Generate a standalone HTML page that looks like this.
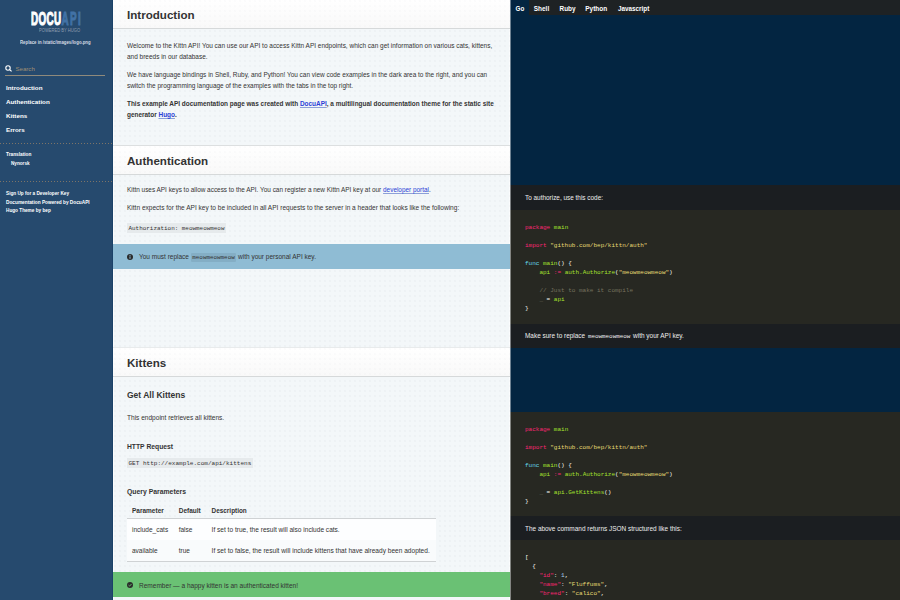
<!DOCTYPE html>
<html><head><meta charset="utf-8">
<style>
*{margin:0;padding:0;box-sizing:border-box}
html,body{width:900px;height:600px;overflow:hidden;background:#f3f7f9;font-family:"Liberation Sans",sans-serif;color:#333;position:relative}
.r{position:absolute}
.t{position:absolute;white-space:nowrap}
.t a{color:#2b3fd6;text-decoration:underline;text-decoration-color:#8da0d8;text-underline-offset:1px}
.t code{font-family:"Liberation Mono",monospace;font-size:5.9px;background:rgba(0,0,0,0.07);padding:1px 1.5px;border-radius:1px}
.t code.d{background:transparent;color:#eee;padding:0 1px}
.k{color:#f92672}.g{color:#a6e22e}.y{color:#e6db74}.bl{color:#66d9ef}.c{color:#75715e}.pu{color:#a3c8ea}
.dots{background-image:radial-gradient(circle at 1px 1px, rgba(120,130,140,0.06) 0.6px, transparent 0.9px);background-size:5px 5px}
</style></head><body>
<!-- sidebar -->
<div class="r" style="left:0;top:0;width:112px;height:600px;background:#264a6e"></div>
<div class="r" style="left:112px;top:0;width:1px;height:600px;background:#1b4268"></div>
<div class="r" style="left:113px;top:0;width:1px;height:600px;background:#fbfcfd"></div>
<!-- logo -->
<div class="t" style="left:30.5px;top:9px;font:bold 19px/20px 'Liberation Sans',sans-serif;color:#fff;transform:scaleX(0.52);transform-origin:0 0;letter-spacing:0.7px;-webkit-text-stroke:1.1px #fff">DOCU<span style="color:#4272a6;-webkit-text-stroke:1.1px #4272a6;letter-spacing:2.6px">API</span></div>
<!-- search icon -->
<svg class="r" style="left:5px;top:65px" width="8" height="7" viewBox="0 0 8 7"><circle cx="3" cy="3" r="2.2" fill="none" stroke="#fff" stroke-width="1.1"/><line x1="4.6" y1="4.6" x2="6.6" y2="6.4" stroke="#fff" stroke-width="1.2"/></svg>
<div class="r" style="left:5px;top:75px;width:100px;height:1px;background:#8f8a7c"></div>
<div class="r" style="left:0;top:143px;width:112px;height:1px;background:repeating-linear-gradient(90deg,#7d7468 0 1.5px,transparent 1.5px 3px)"></div>
<div class="r" style="left:0;top:181px;width:112px;height:1px;background:repeating-linear-gradient(90deg,#7d7468 0 1.5px,transparent 1.5px 3px)"></div>

<!-- main -->
<div class="r" style="left:509px;top:0;width:1px;height:600px;background:#fcfdfe"></div>

<div class="r dots" style="left:114px;top:0;width:396px;height:600px"></div>
<div class="r" style="left:113px;top:0;width:397px;height:28px;background:linear-gradient(#fff,#f9f9f9)"></div>
<div class="r" style="left:113px;top:28px;width:397px;height:1px;background:#d6d9da"></div>
<div class="r" style="left:113px;top:145px;width:397px;height:1px;background:#dcdfe0"></div>
<div class="r" style="left:113px;top:146px;width:397px;height:28px;background:linear-gradient(#fff,#f9f9f9)"></div>
<div class="r" style="left:113px;top:174px;width:397px;height:1px;background:#d6d9da"></div>
<div class="r" style="left:113px;top:347px;width:397px;height:1px;background:#e8ebec"></div>
<div class="r" style="left:113px;top:348px;width:397px;height:28px;background:linear-gradient(#fff,#f9f9f9)"></div>
<div class="r" style="left:113px;top:376px;width:397px;height:1px;background:#d6d9da"></div>
<div class="r dots" style="left:114px;top:0;width:396px;height:28px;opacity:.6"></div>
<div class="r dots" style="left:114px;top:146px;width:396px;height:28px;opacity:.6"></div>
<div class="r dots" style="left:114px;top:348px;width:396px;height:28px;opacity:.6"></div>
<!-- inline code boxes -->
<div class="r" style="left:127px;top:223px;width:99px;height:10px;background:#e6eaec"></div>
<div class="r" style="left:127px;top:458px;width:126px;height:10px;background:#e6eaec"></div>
<!-- notice aside -->
<div class="r" style="left:113px;top:244px;width:397px;height:25px;background:#8fbcd4"></div>
<svg class="r" style="left:127px;top:254px" width="6" height="6" viewBox="0 0 6 6"><circle cx="3" cy="3" r="3" fill="#2b2b2b"/><rect x="2.5" y="2.4" width="1" height="2.4" fill="#8fbcd4"/><rect x="2.5" y="1.1" width="1" height="0.9" fill="#8fbcd4"/></svg>
<!-- table -->
<div class="r" style="left:127px;top:518px;width:309px;height:1px;background:#cfd2d4"></div>
<div class="r" style="left:127px;top:519px;width:309px;height:21px;background:#fdfeff"></div>
<div class="r" style="left:127px;top:540px;width:309px;height:21px;background:#f9fbfc"></div>
<div class="r" style="left:127px;top:561px;width:309px;height:1px;background:#cfd2d4"></div>
<!-- success aside -->
<div class="r" style="left:113px;top:572px;width:397px;height:25px;background:#6ac174"></div>
<svg class="r" style="left:127px;top:582px" width="6" height="6" viewBox="0 0 6 6"><circle cx="3" cy="3" r="3" fill="#2b2b2b"/><path d="M1.5 3.1 L2.6 4.1 L4.5 2" fill="none" stroke="#6ac174" stroke-width="0.9"/></svg>

<!-- right -->
<div class="r" style="left:510px;top:0;width:390px;height:600px;background:#032541"></div>
<div class="r" style="left:510px;top:0;width:390px;height:15px;background:#1e2224"></div>
<div class="r" style="left:510px;top:0;width:19px;height:15px;background:#032541"></div>
<div class="r" style="left:510px;top:185px;width:390px;height:25px;background:#1b1e21"></div>
<div class="r" style="left:510px;top:210px;width:390px;height:114px;background:#272822"></div>
<div class="r" style="left:510px;top:324px;width:390px;height:24px;background:#1b1e21"></div>
<div class="r" style="left:510px;top:412px;width:390px;height:104px;background:#272822"></div>
<div class="r" style="left:510px;top:516px;width:390px;height:24px;background:#1b1e21"></div>
<div class="r" style="left:510px;top:540px;width:390px;height:60px;background:#272822"></div>

<div class="r" style="left:510px;top:0;width:1px;height:600px;background:rgba(243,247,249,0.45)"></div>
<div class="t" style="left:6px;top:78px;font:bold 6.25px/20px 'Liberation Sans',sans-serif;color:#fff;">Introduction</div>
<div class="t" style="left:6px;top:92px;font:bold 6.25px/20px 'Liberation Sans',sans-serif;color:#fff;">Authentication</div>
<div class="t" style="left:6px;top:106px;font:bold 6.25px/20px 'Liberation Sans',sans-serif;color:#fff;">Kittens</div>
<div class="t" style="left:6px;top:120px;font:bold 6.25px/20px 'Liberation Sans',sans-serif;color:#fff;">Errors</div>
<div class="t" style="left:6px;top:145px;font:bold 4.75px/20px 'Liberation Sans',sans-serif;color:#fff;">Translation</div>
<div class="t" style="left:11px;top:154px;font:bold 4.65px/20px 'Liberation Sans',sans-serif;color:#fff;">Nynorsk</div>
<div class="t" style="left:6px;top:184px;font:bold 4.7px/20px 'Liberation Sans',sans-serif;color:#fff;">Sign Up for a Developer Key</div>
<div class="t" style="left:6px;top:193px;font:bold 4.75px/20px 'Liberation Sans',sans-serif;color:#fff;">Documentation Powered by DocuAPI</div>
<div class="t" style="left:6px;top:201px;font:bold 4.7px/20px 'Liberation Sans',sans-serif;color:#fff;">Hugo Theme by bep</div>
<div class="t" style="left:15.5px;top:59px;font:normal 6.1px/20px 'Liberation Sans',sans-serif;color:#a08f74;">Search</div>
<div class="t" style="left:20px;top:32px;font:bold 5.6px/20px 'Liberation Sans',sans-serif;color:#d5dce4;transform:scaleX(0.77);transform-origin:0 0">Replace in /static/images/logo.png</div>
<div class="t" style="left:39px;top:20px;font:normal 5.4px/20px 'Liberation Sans',sans-serif;color:#8d9db0;transform:scaleX(0.76);transform-origin:0 0">POWERED BY HUGO</div>
<div class="t" style="left:127px;top:5px;font:bold 11.6px/20px 'Liberation Sans',sans-serif;color:#333;">Introduction</div>
<div class="t" style="left:127px;top:36px;font:normal 6.47px/20px 'Liberation Sans',sans-serif;color:#333;">Welcome to the Kittn API! You can use our API to access Kittn API endpoints, which can get information on various cats, kittens,</div>
<div class="t" style="left:127px;top:47px;font:normal 6.47px/20px 'Liberation Sans',sans-serif;color:#333;">and breeds in our database.</div>
<div class="t" style="left:127px;top:65px;font:normal 6.45px/20px 'Liberation Sans',sans-serif;color:#333;">We have language bindings in Shell, Ruby, and Python! You can view code examples in the dark area to the right, and you can</div>
<div class="t" style="left:127px;top:76px;font:normal 6.45px/20px 'Liberation Sans',sans-serif;color:#333;">switch the programming language of the examples with the tabs in the top right.</div>
<div class="t" style="left:127px;top:94px;font:bold 6.44px/20px 'Liberation Sans',sans-serif;color:#333;">This example API documentation page was created with <a>DocuAPI</a>, a multilingual documentation theme for the static site</div>
<div class="t" style="left:127px;top:105px;font:bold 6.44px/20px 'Liberation Sans',sans-serif;color:#333;">generator <a>Hugo</a>.</div>
<div class="t" style="left:127px;top:151px;font:bold 11.6px/20px 'Liberation Sans',sans-serif;color:#333;">Authentication</div>
<div class="t" style="left:127px;top:180px;font:normal 6.41px/20px 'Liberation Sans',sans-serif;color:#333;">Kittn uses API keys to allow access to the API. You can register a new Kittn API key at our <a>developer portal</a>.</div>
<div class="t" style="left:127px;top:198px;font:normal 6.54px/20px 'Liberation Sans',sans-serif;color:#333;">Kittn expects for the API key to be included in all API requests to the server in a header that looks like the following:</div>
<div class="t" style="left:128.5px;top:219px;font:normal 5.93px/20px 'Liberation Mono',sans-serif;color:#333;">Authorization: meowmeowmeow</div>
<div class="t" style="left:139px;top:247px;font:normal 6.5px/20px 'Liberation Sans',sans-serif;color:#333;">You must replace <code>meowmeowmeow</code> with your personal API key.</div>
<div class="t" style="left:127px;top:353px;font:bold 11.6px/20px 'Liberation Sans',sans-serif;color:#333;">Kittens</div>
<div class="t" style="left:127px;top:385px;font:bold 8.5px/20px 'Liberation Sans',sans-serif;color:#333;">Get All Kittens</div>
<div class="t" style="left:127px;top:408px;font:normal 6.55px/20px 'Liberation Sans',sans-serif;color:#333;">This endpoint retrieves all kittens.</div>
<div class="t" style="left:127px;top:437px;font:bold 6.75px/20px 'Liberation Sans',sans-serif;color:#333;">HTTP Request</div>
<div class="t" style="left:128.5px;top:454px;font:normal 6.03px/20px 'Liberation Mono',sans-serif;color:#333;">GET http://example.com/api/kittens</div>
<div class="t" style="left:127px;top:482px;font:bold 6.85px/20px 'Liberation Sans',sans-serif;color:#333;">Query Parameters</div>
<div class="t" style="left:132px;top:501px;font:bold 6.5px/20px 'Liberation Sans',sans-serif;color:#333;">Parameter</div>
<div class="t" style="left:178.7px;top:501px;font:bold 6.5px/20px 'Liberation Sans',sans-serif;color:#333;">Default</div>
<div class="t" style="left:211.6px;top:501px;font:bold 6.4px/20px 'Liberation Sans',sans-serif;color:#333;">Description</div>
<div class="t" style="left:132px;top:520px;font:normal 6.5px/20px 'Liberation Sans',sans-serif;color:#333;">include_cats</div>
<div class="t" style="left:178.7px;top:520px;font:normal 6.5px/20px 'Liberation Sans',sans-serif;color:#333;">false</div>
<div class="t" style="left:211.6px;top:520px;font:normal 6.55px/20px 'Liberation Sans',sans-serif;color:#333;">If set to true, the result will also include cats.</div>
<div class="t" style="left:132px;top:541px;font:normal 6.5px/20px 'Liberation Sans',sans-serif;color:#333;">available</div>
<div class="t" style="left:178.7px;top:541px;font:normal 6.5px/20px 'Liberation Sans',sans-serif;color:#333;">true</div>
<div class="t" style="left:211.6px;top:541px;font:normal 6.57px/20px 'Liberation Sans',sans-serif;color:#333;">If set to false, the result will include kittens that have already been adopted.</div>
<div class="t" style="left:139px;top:576px;font:normal 6.54px/20px 'Liberation Sans',sans-serif;color:#333;">Remember — a happy kitten is an authenticated kitten!</div>
<div class="t" style="left:515.5px;top:-1px;font:bold 6.3px/20px 'Liberation Sans',sans-serif;color:#fff;">Go</div>
<div class="t" style="left:533.8px;top:-1px;font:bold 6.44px/20px 'Liberation Sans',sans-serif;color:#fff;">Shell</div>
<div class="t" style="left:559.6px;top:-1px;font:bold 6.4px/20px 'Liberation Sans',sans-serif;color:#fff;">Ruby</div>
<div class="t" style="left:585.3px;top:-1px;font:bold 6.46px/20px 'Liberation Sans',sans-serif;color:#fff;">Python</div>
<div class="t" style="left:617.9px;top:-1px;font:bold 6.35px/20px 'Liberation Sans',sans-serif;color:#fff;">Javascript</div>
<div class="t" style="left:525px;top:188px;font:normal 6.41px/20px 'Liberation Sans',sans-serif;color:#eee;">To authorize, use this code:</div>
<div class="t" style="left:525px;top:326px;font:normal 6.45px/20px 'Liberation Sans',sans-serif;color:#eee;">Make sure to replace <code class="d">meowmeowmeow</code> with your API key.</div>
<div class="t" style="left:525px;top:519px;font:normal 6.45px/20px 'Liberation Sans',sans-serif;color:#eee;">The above command returns JSON structured like this:</div>
<div class="t" style="left:525px;top:218px;font:normal 6.0px/20px 'Liberation Mono',sans-serif;color:#f8f8f2;white-space:pre"><span class="k">package</span> <span class="g">main</span></div>
<div class="t" style="left:525px;top:236px;font:normal 6.0px/20px 'Liberation Mono',sans-serif;color:#f8f8f2;white-space:pre"><span class="k">import</span> <span class="y">"github.com/bep/kittn/auth"</span></div>
<div class="t" style="left:525px;top:254px;font:normal 6.0px/20px 'Liberation Mono',sans-serif;color:#f8f8f2;white-space:pre"><span class="bl">func</span> <span class="g">main</span>() {</div>
<div class="t" style="left:525px;top:263px;font:normal 6.0px/20px 'Liberation Mono',sans-serif;color:#f8f8f2;white-space:pre">    <span class="g">api</span> <span class="k">:=</span> <span class="g">auth.Authorize</span>(<span class="y">"meowmeowmeow"</span>)</div>
<div class="t" style="left:525px;top:281px;font:normal 6.0px/20px 'Liberation Mono',sans-serif;color:#f8f8f2;white-space:pre">    <span class="c">// Just to make it compile</span></div>
<div class="t" style="left:525px;top:290px;font:normal 6.0px/20px 'Liberation Mono',sans-serif;color:#f8f8f2;white-space:pre">    <span class="c">_</span> = <span class="g">api</span></div>
<div class="t" style="left:525px;top:299px;font:normal 6.0px/20px 'Liberation Mono',sans-serif;color:#f8f8f2;white-space:pre">}</div>
<div class="t" style="left:525px;top:420px;font:normal 6.0px/20px 'Liberation Mono',sans-serif;color:#f8f8f2;white-space:pre"><span class="k">package</span> <span class="g">main</span></div>
<div class="t" style="left:525px;top:438px;font:normal 6.0px/20px 'Liberation Mono',sans-serif;color:#f8f8f2;white-space:pre"><span class="k">import</span> <span class="y">"github.com/bep/kittn/auth"</span></div>
<div class="t" style="left:525px;top:456px;font:normal 6.0px/20px 'Liberation Mono',sans-serif;color:#f8f8f2;white-space:pre"><span class="bl">func</span> <span class="g">main</span>() {</div>
<div class="t" style="left:525px;top:465px;font:normal 6.0px/20px 'Liberation Mono',sans-serif;color:#f8f8f2;white-space:pre">    <span class="g">api</span> <span class="k">:=</span> <span class="g">auth.Authorize</span>(<span class="y">"meowmeowmeow"</span>)</div>
<div class="t" style="left:525px;top:483px;font:normal 6.0px/20px 'Liberation Mono',sans-serif;color:#f8f8f2;white-space:pre">    <span class="c">_</span> = <span class="g">api.GetKittens</span>()</div>
<div class="t" style="left:525px;top:492px;font:normal 6.0px/20px 'Liberation Mono',sans-serif;color:#f8f8f2;white-space:pre">}</div>
<div class="t" style="left:525px;top:548px;font:normal 6.0px/20px 'Liberation Mono',sans-serif;color:#f8f8f2;white-space:pre">[</div>
<div class="t" style="left:525px;top:557px;font:normal 6.0px/20px 'Liberation Mono',sans-serif;color:#f8f8f2;white-space:pre">  {</div>
<div class="t" style="left:525px;top:566px;font:normal 6.0px/20px 'Liberation Mono',sans-serif;color:#f8f8f2;white-space:pre">    <span class="k">"id"</span>: <span class="pu">1</span>,</div>
<div class="t" style="left:525px;top:575px;font:normal 6.0px/20px 'Liberation Mono',sans-serif;color:#f8f8f2;white-space:pre">    <span class="k">"name"</span>: <span class="y">"Fluffums"</span>,</div>
<div class="t" style="left:525px;top:584px;font:normal 6.0px/20px 'Liberation Mono',sans-serif;color:#f8f8f2;white-space:pre">    <span class="k">"breed"</span>: <span class="y">"calico"</span>,</div>
<div class="t" style="left:525px;top:593px;font:normal 6.0px/20px 'Liberation Mono',sans-serif;color:#f8f8f2;white-space:pre">    <span class="k">"fluffiness"</span>: <span class="pu">6</span>,</div>
</body></html>
